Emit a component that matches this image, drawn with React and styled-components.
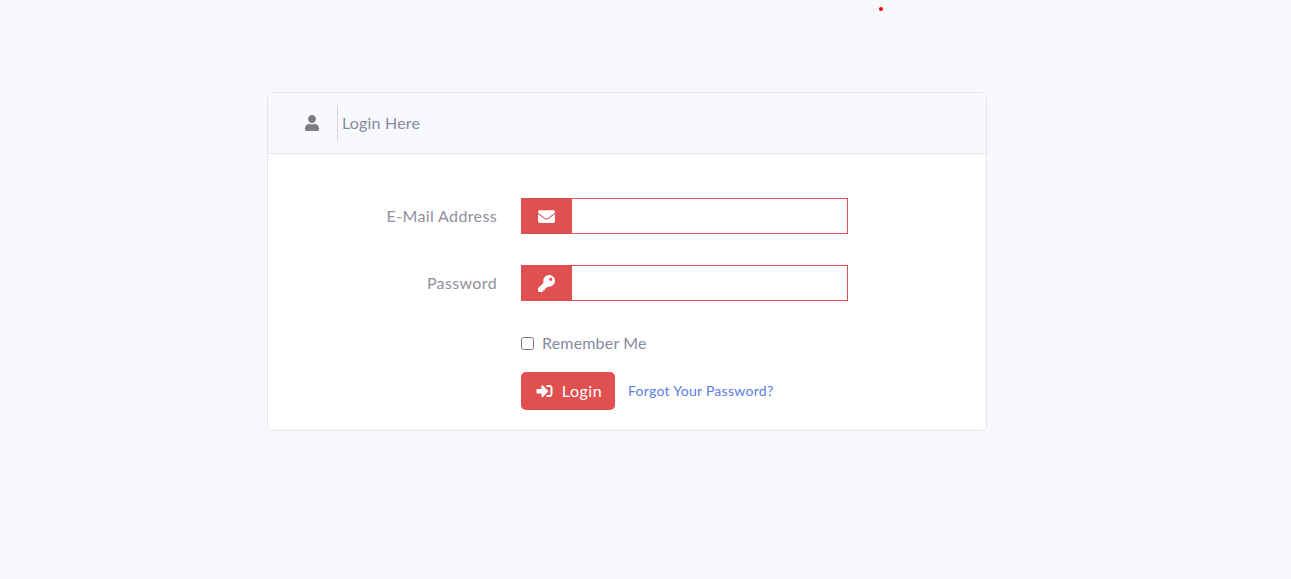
import React from 'react';
import styled, { createGlobalStyle } from 'styled-components';
import { FaUser, FaEnvelope, FaKey, FaSignInAlt } from 'react-icons/fa';

const GlobalStyle = createGlobalStyle`
  html, body {
    margin: 0;
    padding: 0;
    background: #f8f9fd;
  }
  body {
    font-family: "Lato", "Open Sans", "Liberation Sans", sans-serif;
    color: #6c757d;
  }
`;

const Page = styled.div`
  position: relative;
  box-sizing: border-box;
  height: 579px;
  overflow: hidden;
  padding: 92px 0 0 267px;
`;

const RedDot = styled.span`
  position: absolute;
  left: 879px;
  top: 7px;
  width: 4px;
  height: 4px;
  border-radius: 50%;
  background: #f00;
`;

const Card = styled.div`
  box-sizing: border-box;
  width: 720px;
  height: 339px;
  background: #fff;
  border: 1px solid #e3e6f0;
  border-radius: 5px;
  overflow: hidden;
`;

const CardHeader = styled.div`
  box-sizing: border-box;
  height: 61px;
  display: flex;
  align-items: center;
  padding-left: 37px;
  background: #f8f9fd;
  border-bottom: 1px solid #e3e6f0;
`;

const UserIcon = styled(FaUser)`
  width: 14px;
  height: 16px;
  color: #7b7d80;
`;

const HeaderText = styled.span`
  margin-left: 18px;
  height: 36px;
  line-height: 35px;
  padding-left: 4px;
  border-left: 1px solid #ced4da;
  font-size: 16px;
  letter-spacing: 0.2px;
  color: #858b9e;
`;

const CardBody = styled.div`
  padding: 44px 0 0 0;
`;

const Row = styled.div`
  display: flex;
  align-items: center;
  height: 36px;
  margin-bottom: 31px;
`;

const Label = styled.label`
  width: 229px;
  text-align: right;
  font-size: 16px;
  letter-spacing: 0.37px;
  color: #918f9e;
  margin-right: 24px;
  padding-bottom: 2px;
`;

const IconBox = styled.div`
  width: 51px;
  height: 36px;
  display: flex;
  align-items: center;
  justify-content: center;
  background: #e05050;
  color: #fff;
  font-size: 17px;
`;

const Input = styled.input`
  box-sizing: border-box;
  width: 276px;
  height: 36px;
  border: 1px solid #e05050;
  border-left: none;
  background: #fff;
  outline: none;
  padding: 0 10px;
`;

const CheckRow = styled.div`
  display: flex;
  align-items: center;
  margin: 35px 0 0 253px;
  height: 14px;
`;

const Check = styled.input`
  box-sizing: border-box;
  width: 13px;
  height: 13px;
  margin: 0 8px 0 0;
`;

const CheckLabel = styled.label`
  font-size: 16px;
  letter-spacing: 0.18px;
  color: #858b9e;
  padding-bottom: 2px;
`;

const Actions = styled.div`
  display: flex;
  align-items: center;
  margin: 22px 0 0 253px;
`;

const LoginButton = styled.button`
  box-sizing: border-box;
  width: 94px;
  height: 38px;
  display: flex;
  align-items: center;
  justify-content: center;
  gap: 9px;
  padding: 0 0 2px 2px;
  border: none;
  border-radius: 5px;
  background: #e05050;
  color: #fff;
  font-family: inherit;
  font-size: 16px;
  letter-spacing: 0.5px;
`;

const LoginIcon = styled(FaSignInAlt)`
  width: 17px;
  height: 16px;
  margin-top: 2px;
`;

const ForgotLink = styled.a`
  margin-left: 13px;
  padding-bottom: 2px;
  font-size: 14px;
  letter-spacing: 0.28px;
  color: #5a7de3;
  text-decoration: none;
`;

export default function App() {
  return (
    <>
      <GlobalStyle />
      <Page>
        <RedDot />
        <Card>
          <CardHeader>
            <UserIcon />
            <HeaderText>Login Here</HeaderText>
          </CardHeader>
          <CardBody>
            <Row>
              <Label>E-Mail Address</Label>
              <IconBox><FaEnvelope /></IconBox>
              <Input type="email" />
            </Row>
            <Row>
              <Label>Password</Label>
              <IconBox><FaKey /></IconBox>
              <Input type="password" />
            </Row>
            <CheckRow>
              <Check type="checkbox" />
              <CheckLabel>Remember Me</CheckLabel>
            </CheckRow>
            <Actions>
              <LoginButton><LoginIcon /> Login</LoginButton>
              <ForgotLink href="#">Forgot Your Password?</ForgotLink>
            </Actions>
          </CardBody>
        </Card>
      </Page>
    </>
  );
}
